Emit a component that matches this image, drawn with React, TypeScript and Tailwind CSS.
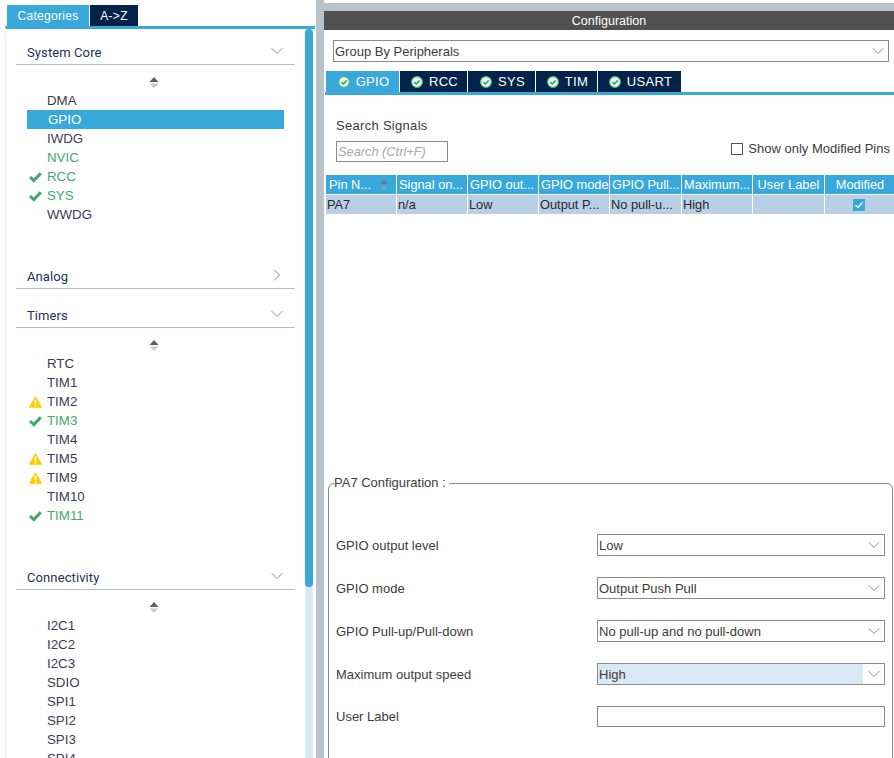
import { ChevronDown, ChevronRight } from 'lucide-react';

const sans = "font-['Liberation_Sans',Arial,sans-serif]";

const CheckMark: React.FC = () => (
    <svg width="13" height="12" viewBox="0 0 13 12" className="block">
        <path d="M1 6 L4.8 9.6 L11.8 2.2" fill="none" stroke="#3fa96c" strokeWidth="3" />
    </svg>
);

const Warning: React.FC = () => (
    <svg width="13" height="12" viewBox="0 0 13 12" className="block">
        <path d="M6.5 0.8 L12.5 11.2 L0.5 11.2 Z" fill="#ffcc00" stroke="#ffcc00" strokeLinejoin="round" />
        <rect x="5.8" y="3.5" width="1.5" height="4.6" fill="#fff" />
        <rect x="5.8" y="9" width="1.5" height="1.5" fill="#fff" />
    </svg>
);

const SortArrows: React.FC = () => (
    <div className="flex justify-center h-[19px] items-center">
        <svg width="10" height="11" viewBox="0 0 10 11" className="mt-[2px]">
            <path d="M5 0 L9.5 5 L0.5 5 Z" fill="#5f5f5f" />
            <path d="M5 11 L9.5 6.5 L0.5 6.5 Z" fill="#c8c8c8" />
        </svg>
    </div>
);

type Item = { name: string; state?: 'ok' | 'warn' | 'green'; selected?: boolean };

const ListRow: React.FC<{ item: Item }> = ({ item }) => {
    const green = item.state === 'ok' || item.state === 'green';
    return (
        <div className={`flex items-center h-[19px] w-[257px] text-[13.3px] ${item.selected ? 'bg-[#39a9dc] text-white' : green ? 'text-[#3eab6b]' : 'text-[#3c3c50]'}`}>
            <span className="w-[20px] flex justify-start pl-[2px] shrink-0">
                {item.state === 'ok' && <CheckMark />}
                {item.state === 'warn' && <Warning />}
            </span>
            <span className={item.selected ? 'ml-[1px]' : ''}>{item.name}</span>
        </div>
    );
};

const Section: React.FC<{ title: string; open?: boolean; items?: Item[]; height: number }> = ({ title, open = true, items, height }) => (
    <div style={{ height }}>
        <div className="flex items-center justify-between h-[25px] ml-[16px] mr-[10px] pl-[11px] pr-[8px] border-b border-[#b4c0c8] text-[13px] tracking-[0.1px] text-[#24305a] font-['Roboto',sans-serif]">
            <span className="pt-[2px]">{title}</span>
            <span className="pb-[3px]">
                {open ? <ChevronDown size={20} strokeWidth={1} color="#777" /> : <ChevronRight size={20} strokeWidth={1} color="#777" />}
            </span>
        </div>
        {items && (
            <div className="pl-[27px] pt-[7px]">
                <div className="w-[254px]"><SortArrows /></div>
                {items.map((it) => <ListRow key={it.name} item={it} />)}
            </div>
        )}
    </div>
);

const SelectBox: React.FC<{ value: string; highlight?: boolean; className?: string }> = ({ value, highlight, className }) => (
    <div className={`flex items-stretch border border-[#8b8b8b] text-[13px] text-[#3c3c3c] ${className ?? ''}`}>
        <span className={`flex-1 flex items-center pl-[1px] pt-[1px] ${highlight ? 'bg-[#d8e8f5]' : ''}`}>{value}</span>
        <span className="w-[21px] flex items-center justify-center"><ChevronDown size={20} strokeWidth={1} color="#777" /></span>
    </div>
);

const TabCheck: React.FC = () => (
    <svg width="12" height="12" viewBox="0 0 12 12" className="block">
        <circle cx="6" cy="6" r="5.4" fill="#eef7f0" stroke="#4fb478" strokeWidth="1.2" />
        <path d="M3.3 6.1 L5.3 8 L8.8 4.3" fill="none" stroke="#3fa96c" strokeWidth="1.7" />
    </svg>
);

const tabs = [
    { name: 'GPIO', w: 'w-[74px]', active: true },
    { name: 'RCC', w: 'w-[68px]' },
    { name: 'SYS', w: 'w-[68px]' },
    { name: 'TIM', w: 'w-[62px]' },
    { name: 'USART', w: 'w-[83px]' },
];

const columns = [
    { head: 'Pin N...', cell: 'PA7', w: 'w-[71px]', sort: true },
    { head: 'Signal on...', cell: 'n/a', w: 'w-[71px]' },
    { head: 'GPIO out...', cell: 'Low', w: 'w-[71px]' },
    { head: 'GPIO mode', cell: 'Output P...', w: 'w-[71px]' },
    { head: 'GPIO Pull...', cell: 'No pull-u...', w: 'w-[72px]' },
    { head: 'Maximum...', cell: 'High', w: 'w-[71px]' },
    { head: 'User Label', cell: '', w: 'w-[72px]', center: true },
    { head: 'Modified', cell: '', w: 'w-[70px]', center: true, check: true },
];

const formRows = [
    { label: 'GPIO output level', value: 'Low' },
    { label: 'GPIO mode', value: 'Output Push Pull' },
    { label: 'GPIO Pull-up/Pull-down', value: 'No pull-up and no pull-down' },
    { label: 'Maximum output speed', value: 'High', highlight: true },
];

const systemCore: Item[] = [
    { name: 'DMA' },
    { name: 'GPIO', selected: true },
    { name: 'IWDG' },
    { name: 'NVIC', state: 'green' },
    { name: 'RCC', state: 'ok' },
    { name: 'SYS', state: 'ok' },
    { name: 'WWDG' },
];

const timers: Item[] = [
    { name: 'RTC' },
    { name: 'TIM1' },
    { name: 'TIM2', state: 'warn' },
    { name: 'TIM3', state: 'ok' },
    { name: 'TIM4' },
    { name: 'TIM5', state: 'warn' },
    { name: 'TIM9', state: 'warn' },
    { name: 'TIM10' },
    { name: 'TIM11', state: 'ok' },
];

const connectivity: Item[] = ['I2C1', 'I2C2', 'I2C3', 'SDIO', 'SPI1', 'SPI2', 'SPI3', 'SPI4'].map((name) => ({ name }));

export default function App() {
    return (
        <div className={`flex w-[894px] h-[758px] overflow-hidden bg-white ${sans}`}>
            {/* left panel */}
            <div className="w-[316px] shrink-0 flex flex-col pt-[5px]">
                <div className="flex h-[21px] pl-[7px] gap-[1px] text-[12px] text-white tracking-[0.3px]">
                    <div className="w-[82px] bg-[#39a9dc] flex items-center justify-center">Categories</div>
                    <div className="w-[48px] bg-[#02234a] flex items-center justify-center">A-&gt;Z</div>
                </div>
                <div className="flex-1 flex min-h-0 ml-[5px] mr-[1px] border-l border-l-[#eeeeee] border-t-[3px] border-t-[#39a9dc]">
                    <div className="flex-1 min-w-0 overflow-hidden -ml-[6px] pt-[11px]">
                        <Section title="System Core" items={systemCore} height={224} />
                        <Section title="Analog" open={false} height={39} />
                        <Section title="Timers" items={timers} height={262} />
                        <Section title="Connectivity" items={connectivity} height={300} />
                    </div>
                    <div className="w-[8px] mr-[2px] bg-[#d8e8f5] shrink-0">
                        <div className="h-[558px] bg-[#39a9dc] rounded-[4px]" />
                    </div>
                </div>
            </div>

            <div className="w-[8px] shrink-0 bg-[#b8c2ca]" />

            {/* right panel */}
            <div className="flex-1 min-w-0 flex flex-col pt-[3px]">
                <div className="h-[8px] bg-[#b8c2ca] shrink-0" />
                <div className="h-[19px] shrink-0 bg-[#505150] text-white text-[12.5px] pt-[1px] flex items-center justify-center">Configuration</div>
                <SelectBox value="Group By Peripherals" className="h-[22px] mt-[10px] ml-[9px] mr-[5px] shrink-0" />
                <div className="flex mt-[9px] ml-[2px] h-[21px] shrink-0 text-[13px] text-white tracking-[0.3px]">
                    {tabs.map((t) => (
                        <div key={t.name} className={`${t.w} ${t.active ? 'bg-[#39a9dc]' : 'bg-[#02234a]'} flex items-center justify-center gap-[6px] pl-[2px] border-r border-white last:border-r-0`}>
                            <TabCheck />
                            <span>{t.name}</span>
                        </div>
                    ))}
                </div>
                <div className="h-[3px] bg-[#39a9dc] ml-[1px] shrink-0" />

                <div className="flex justify-between items-start mt-[23px] pl-[12px] pr-[4px] h-[57px] shrink-0 text-[13px] text-[#3c3c3c]">
                    <div>
                        <div className="h-[15px] leading-[15px] tracking-[0.3px]">Search Signals</div>
                        <div className="mt-[8px] w-[112px] h-[21px] border border-[#8b8b8b] flex items-center pl-[1px] italic text-[#a8a8a8] text-[12.8px]">Search (Ctrl+F)</div>
                    </div>
                    <div className="flex items-center gap-[5px] mt-[21px]">
                        <span className="w-[12px] h-[12px] border border-[#555] block" />
                        <span>Show only Modified Pins</span>
                    </div>
                </div>

                <div className="flex ml-[2px] text-[12.8px] shrink-0">
                    {columns.map((c, i) => (
                        <div key={i} className={`${c.w} shrink-0 border-r border-white last:border-r-0`}>
                            <div className={`h-[19px] bg-[#39a9dc] text-white border-b border-white box-content flex items-center whitespace-nowrap overflow-hidden ${c.center ? 'justify-center' : c.sort ? 'pl-[3px]' : 'pl-[2px]'}`}>
                                <span>{c.head}</span>
                                {c.sort && (
                                    <svg width="10" height="12" viewBox="0 0 10 12" className="ml-auto mr-[7px] shrink-0">
                                        <path d="M5 0 L9 5 L1 5 Z" fill="#5f7f95" />
                                        <path d="M5 12 L9 7 L1 7 Z" fill="#6fa8c8" />
                                    </svg>
                                )}
                            </div>
                            <div className={`h-[19px] bg-[#b8cfe5] text-[#2a2a2a] flex items-center whitespace-nowrap overflow-hidden justify-start ${c.check ? 'pr-[2px]' : 'pl-[1px]'}`}>
                                {c.check ? (
                                    <span className="w-[12px] h-[12px] mx-auto bg-[#39a9dc] flex items-center justify-center">
                                        <svg width="10" height="10" viewBox="0 0 10 10">
                                            <path d="M1.5 5.2 L4 7.6 L8.5 2.4" fill="none" stroke="#fff" strokeWidth="1.4" />
                                        </svg>
                                    </span>
                                ) : c.cell}
                            </div>
                        </div>
                    ))}
                </div>

                <div className="h-[262px] shrink-0" />

                <fieldset className="ml-[4px] mr-[1px] flex-1 min-h-[300px] border border-[#8b8b8b] rounded-[6px] pl-[7px] pr-[7px] text-[13px] text-[#3c3c3c]">
                    <legend className="-ml-[2px] pr-[3px] pl-0 leading-[14px]">PA7 Configuration :</legend>
                    <div className="flex flex-col pt-[44px]">
                        {formRows.map((r) => (
                            <div key={r.label} className="flex items-center justify-between h-[22px] mb-[21px]">
                                <span className="pt-[1px]">{r.label}</span>
                                <SelectBox value={r.value} highlight={r.highlight} className="w-[288px] h-[22px]" />
                            </div>
                        ))}
                        <div className="flex items-center justify-between h-[21px]">
                            <span>User Label</span>
                            <div className="w-[288px] h-[21px] border border-[#8b8b8b]" />
                        </div>
                    </div>
                </fieldset>
            </div>
        </div>
    );
}
